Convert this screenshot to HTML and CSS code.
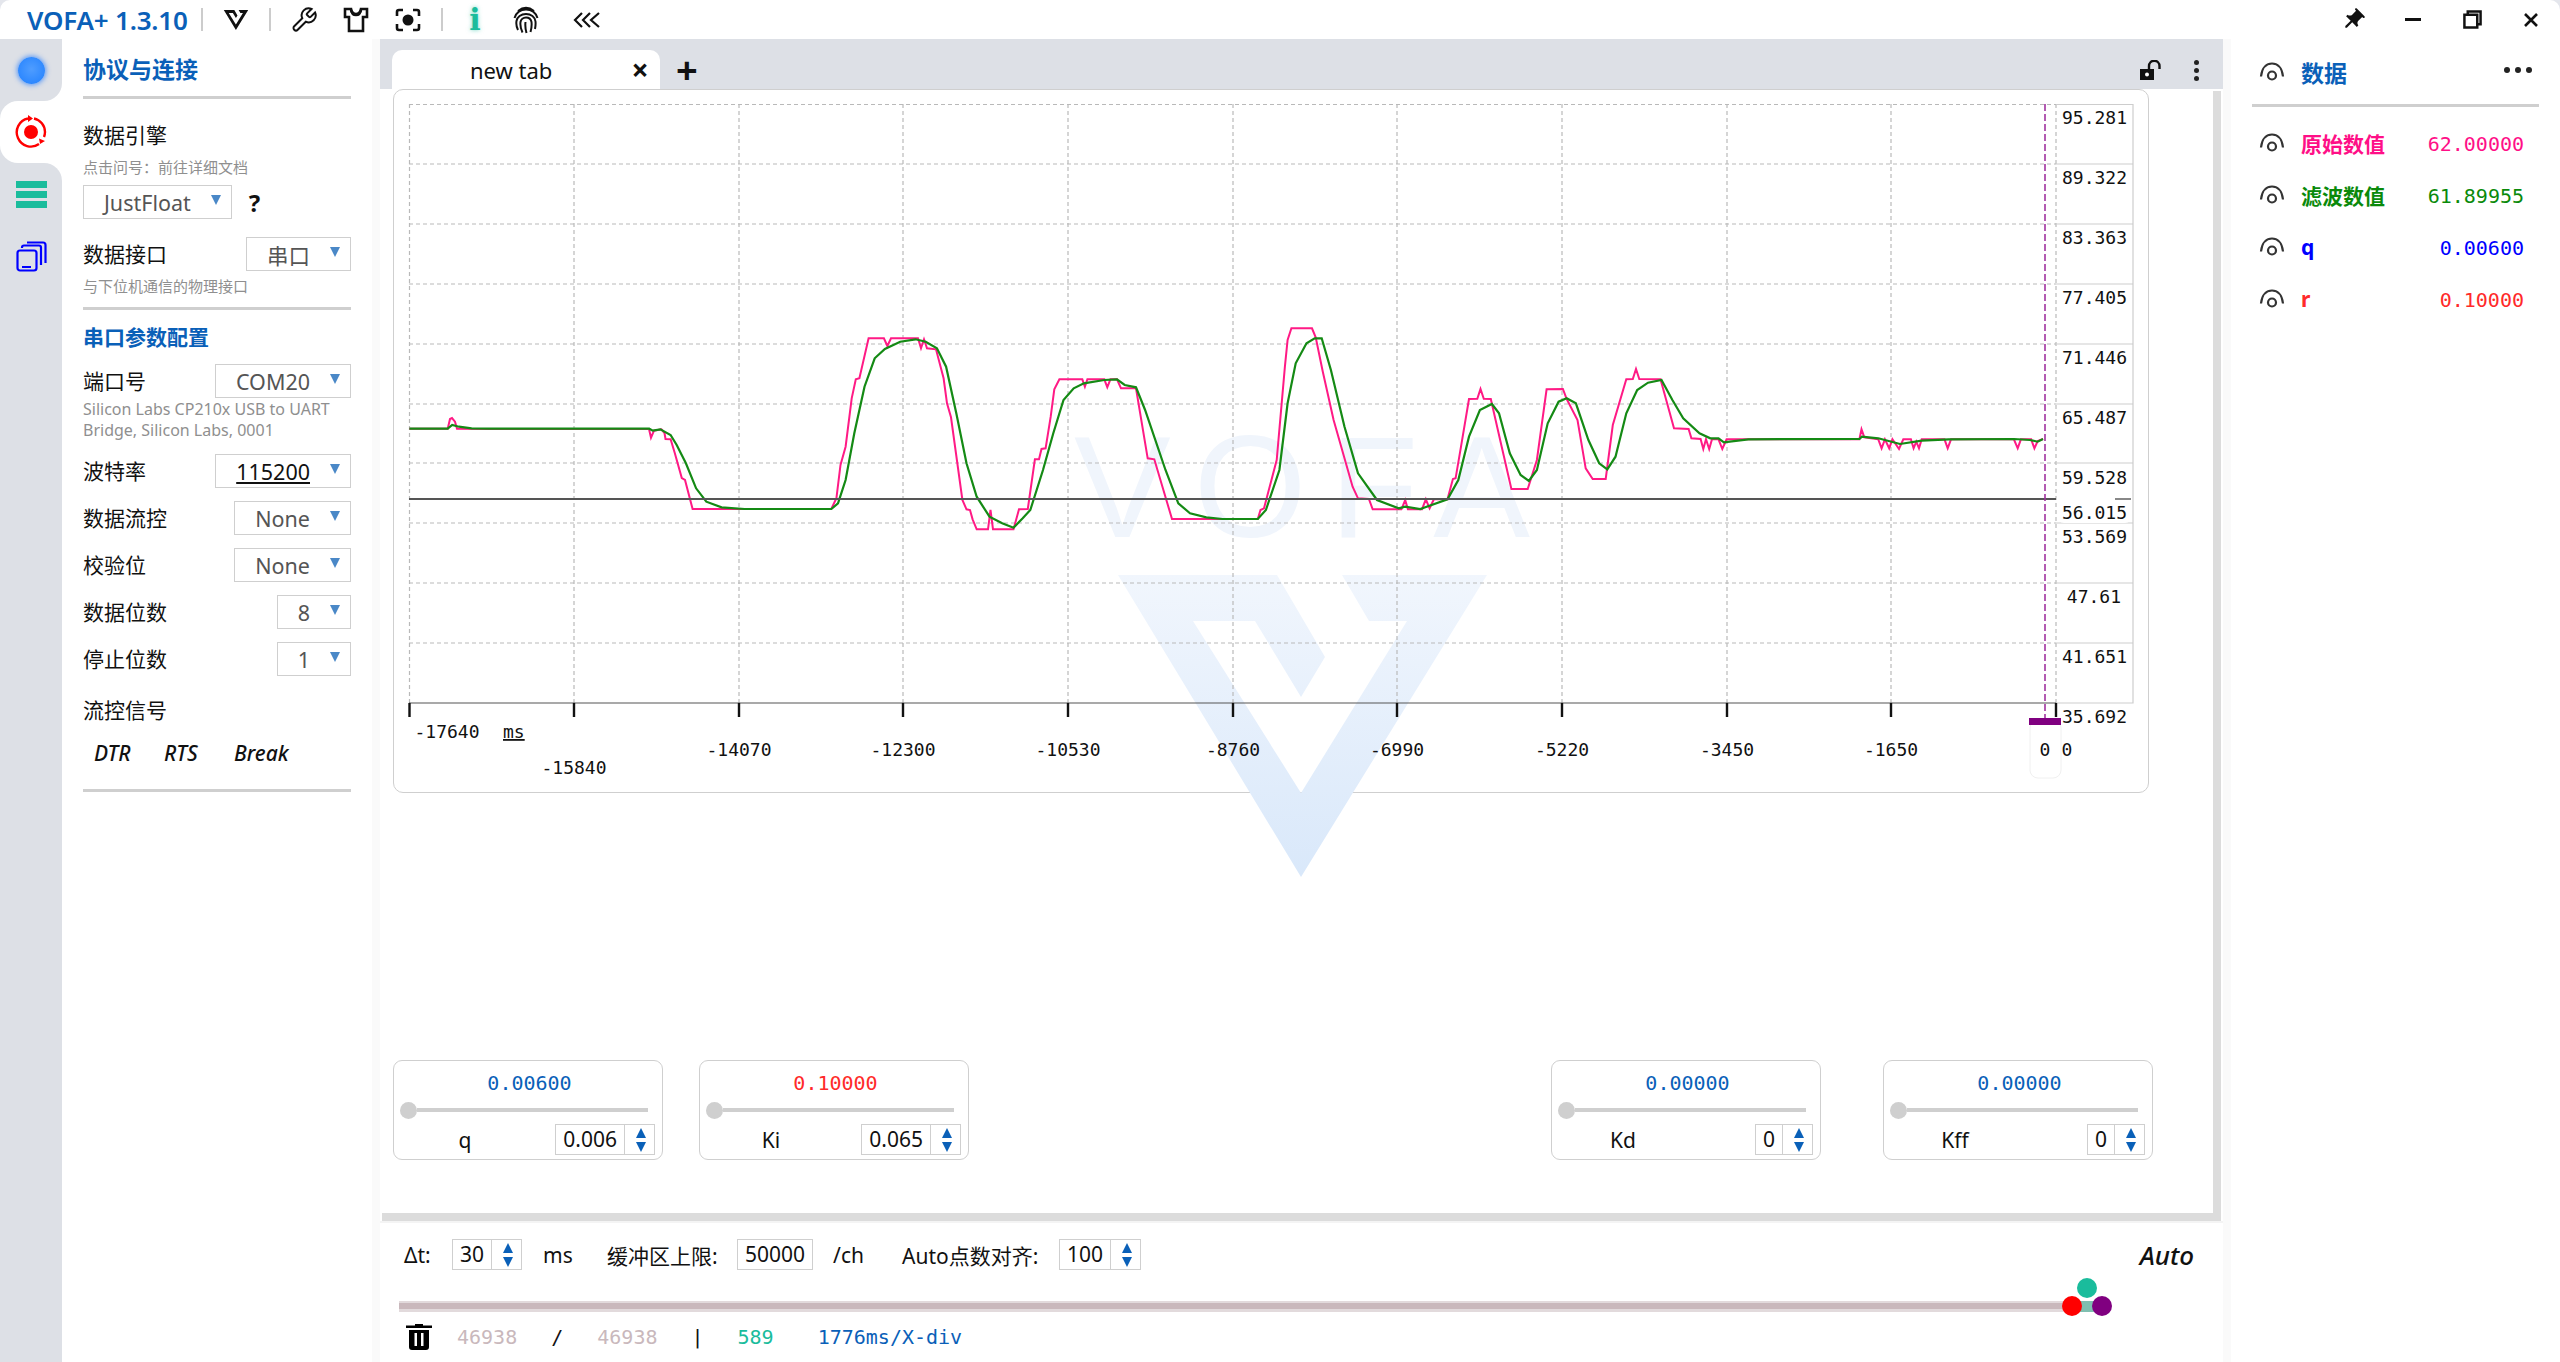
FILE: index.html
```html
<!DOCTYPE html>
<html lang="zh-CN">
<head>
    <meta charset="UTF-8">
    <title>VOFA+ 1.3.10</title>
    <link rel="stylesheet" href="styles.css">
</head>
<body>
<svg class="defs">
    <symbol id="vofa-v" viewBox="1118 575 369 302">
        <path d="M1118 575H1277L1325 657L1301 697L1255 621H1193L1301 793L1407 621H1369L1342 575H1487L1301 877Z"/>
    </symbol>
    <symbol id="eye-ico" viewBox="0 0 26 20">
        <path d="M2 14.500C3 5 8 1.500 13 1.500S23 5 24 14.500"/>
        <circle cx="13" cy="13.500" r="4"/>
    </symbol>
    <linearGradient id="wm-fade" x1="0" y1="0" x2="0" y2="1">
        <stop offset="0" stop-color="#f1f6fd"/>
        <stop offset="1" stop-color="#d9e8fa"/>
    </linearGradient>
</svg>

<div class="window">
    <header class="topbar">
        <span class="app-name">VOFA+ 1.3.10</span>
        <span class="sep sep-a"></span>
        <svg class="ico ico-logo"><use href="#vofa-v"/></svg>
        <span class="sep sep-b"></span>
        <svg class="ico ico-wrench" viewBox="0 0 24 24"><path d="M14.7 6.3a1 1 0 0 0 0 1.4l1.6 1.6a1 1 0 0 0 1.4 0l3.77-3.77a6 6 0 0 1-7.94 7.94l-6.91 6.91a2.12 2.12 0 0 1-3-3l6.91-6.91a6 6 0 0 1 7.94-7.94z"/></svg>
        <svg class="ico ico-shirt" viewBox="0 0 26 26"><path d="M2 2h6c.5 4 1.500 6 5 6s4.500-2 5-6h6v8h-4v14H6V10H2z"/><path d="M8 3c1 3 2 4 5 4s4-1 5-4"/></svg>
        <svg class="ico ico-focus" viewBox="0 0 26 24"><path d="M8 2H4a2 2 0 0 0-2 2v4M18 2h4a2 2 0 0 1 2 2v4M8 22H4a2 2 0 0 1-2-2v-4M18 22h4a2 2 0 0 0 2-2v-4"/><circle cx="13" cy="12" r="5.500"/></svg>
        <span class="sep sep-c"></span>
        <span class="info-i">i</span>
        <svg class="ico ico-print" viewBox="0 0 28 28"><path d="M6 5c5-4 11-4 16 0M2.500 12c2-6 7-8.500 11.500-8.500S23.500 6 25.500 12M6 24c-1.500-3-2-6-1.500-9 .6-4 4.500-7 9.500-7s9 3 9.500 7.500c.3 3 0 5-.5 7.500M10.500 26.500c-1.500-3-2.500-6.500-2-10.500.4-2.500 2.800-4.500 5.500-4.500s5 2 5.500 4.500c.4 3.500 0 6.500-1 10M14.500 27c-1-3.500-1.500-7-1-11"/></svg>
        <svg class="ico ico-chev" viewBox="0 0 28 16"><path d="M9 1L2 8l7 7M17 1l-7 7 7 7M26 1l-8 7 8 7"/></svg>

        <div class="win-btns">
            <svg class="win-pin" viewBox="0 0 24 24"><path transform="rotate(45 12 12)" d="M16 9V4h1c.55 0 1-.45 1-1s-.45-1-1-1H7c-.55 0-1 .45-1 1s.45 1 1 1h1v5c0 1.660-1.340 3-3 3v2h5.970v7l1 1 1-1v-7H19v-2c-1.660 0-3-1.340-3-3z"/></svg>
            <span class="win-min"></span>
            <svg class="win-max" viewBox="0 0 20 20"><path d="M5 5V1.500h13.500V15H15M1.500 5H15v13.500H1.500z"/></svg>
            <svg class="win-close" viewBox="0 0 14 14"><path d="M1 1l12 12M13 1L1 13"/></svg>
        </div>
    </header>

    <div class="app">
        <nav class="rail">
            <div class="rail-item rail-first"><span class="rail-dot"></span></div>
            <div class="rail-item rail-active">
                <svg class="rail-rec" viewBox="0 0 34 34"><path d="M20 3.500A14 14 0 0 1 31 17a14 14 0 0 1-1 5M25 29a14 14 0 0 1-21-6A14 14 0 0 1 14 3.500"/><path class="solid" d="M14 0l5 3.500-5 3.500zM31 26l-5 3-1-5.500z"/><circle class="solid" cx="17" cy="17" r="7"/></svg>
            </div>
            <div class="rail-item rail-third">
                <span class="bars"><i></i><i></i><i></i></span>
            </div>
            <div class="rail-item">
                <svg class="rail-copy" viewBox="0 0 31 31"><rect x="1.500" y="9.500" width="19" height="20" rx="2.500"/><path d="M6 26h9M6 7V6.500a2 2 0 0 1 2-2h15a2 2 0 0 1 2 2V24M11 1.500h16a2.500 2.500 0 0 1 2.500 2.500v18"/></svg>
            </div>
            <div class="rail-fill"></div>
        </nav>

        <aside class="side">
            <div class="side-title">协议与连接</div>
            <div class="rule"></div>
            <div class="field-name engine-name">数据引擎</div>
            <div class="hint engine-hint">点击问号：前往详细文档</div>
            <div class="engine-row">
                <div class="sel"><span>JustFloat</span><i></i></div>
                <b class="help">?</b>
            </div>
            <div class="row iface-row">
                <span class="field-name">数据接口</span>
                <div class="sel"><span>串口</span><i></i></div>
            </div>
            <div class="hint iface-hint">与下位机通信的物理接口</div>
            <div class="rule rule-b"></div>
            <div class="sub-title">串口参数配置</div>
            <div class="row port-row">
                <span class="field-name">端口号</span>
                <div class="sel"><span>COM20</span><i></i></div>
            </div>
            <div class="hint port-hint">Silicon Labs CP210x USB to UART Bridge, Silicon Labs, 0001</div>
            <div class="row">
                <span class="field-name">波特率</span>
                <div class="sel sel-edit"><span>115200</span><i></i></div>
            </div>
            <div class="row">
                <span class="field-name">数据流控</span>
                <div class="sel"><span>None</span><i></i></div>
            </div>
            <div class="row">
                <span class="field-name">校验位</span>
                <div class="sel"><span>None</span><i></i></div>
            </div>
            <div class="row">
                <span class="field-name">数据位数</span>
                <div class="sel"><span>8</span><i></i></div>
            </div>
            <div class="row">
                <span class="field-name">停止位数</span>
                <div class="sel"><span>1</span><i></i></div>
            </div>
            <div class="field-name flow-name">流控信号</div>
            <div class="flow-row">
                <span class="flow-dtr">DTR</span>
                <span class="flow-rts">RTS</span>
                <span class="flow-break">Break</span>
            </div>
            <div class="rule rule-c"></div>
        </aside>

        <main class="main">
            <div class="tabbar">
                <div class="tab"><span class="tab-name">new tab</span><span class="tab-x">×</span></div>
                <span class="tab-add">+</span>
                <svg class="tab-lock" viewBox="0 0 22 20"><path class="solid" d="M0 9h14v11H0z"/><circle class="hole" cx="7" cy="14.500" r="2"/><path d="M9 9V6a5.200 5.200 0 0 1 10.500 0v3"/></svg>
                <span class="kebab"><i></i><i></i><i></i></span>
            </div>

            <div class="view">
                <div class="view-inner">
                    <div class="canvas">
                        <div class="plot">
                            <svg class="chart" viewBox="394 90 1754 702">
                                <!-- watermark -->
                                <text class="wm-text" x="1074" y="537" textLength="456">VOFA</text>
                                <use class="wm-logo" href="#vofa-v" x="1118" y="575" width="369" height="302"/>

                                <path class="grid" d="M409 104.500H2056M409 164H2056M409 224H2056M409 284H2056M409 344H2056M409 404H2056M409 463H2056M409 523H2056M409 583H2056M409 643H2056"/>
                                <path class="grid" d="M409.500 104V703M574 104V703M739 104V703M903 104V703M1068 104V703M1233 104V703M1397 104V703M1562 104V703M1727 104V703M1891 104V703M2056 104V703"/>
                                <path class="scale-box" d="M2056 104.500H2133V703H2056M2056 164H2133M2056 224H2133M2056 284H2133M2056 344H2133M2056 404H2133M2056 463H2133M2056 523H2133M2056 583H2133M2056 643H2133"/>

                                <polyline class="trace-raw" points="409.400,428.700 447.700,428.700 450,419 452,418 455,421.700 457,428.700 489.500,429 649,429 651,437.700 654,430.700 661.400,429.300 664.500,433 665.500,439 670.600,439.300 674.700,452.700 681.800,478 685,480 692.600,509 726.700,509 831.300,509 836.400,498.300 840.500,465 845.600,446.700 851.700,398.300 855.800,379.300 859.400,378.300 868.600,338.300 883.900,338.300 887.400,346 891,338.300 918,338.300 921,348.300 924,339.300 927,348.300 936,349.300 943.600,378.300 947,403.300 951,417.300 962.400,500 966.500,509.300 970,510 972.600,519.300 976.700,529.300 988,529.300 990.500,510 993,529.300 1013.500,529.300 1019,509.300 1027.800,509 1034.900,459.300 1039,459.300 1041.500,449 1045.600,448.300 1050.700,416.700 1054.300,389.300 1059.400,379.300 1082.300,379.300 1084.900,386.700 1087.400,379.300 1104.300,379.300 1107.300,387.300 1110.400,379.300 1117,379.300 1121,388.300 1136,388.300 1147.700,458.300 1154.300,459.300 1172,519 1190,519 1257.800,519 1260.500,510 1264,508.300 1276.700,460 1284.900,366.700 1287.600,340 1291.400,328.300 1312,328.300 1315.700,337.300 1322.800,371.700 1333.600,420 1352.600,486.700 1358,498.300 1368.900,499 1372.700,509.300 1401.400,509.300 1405.200,500 1407.900,509.300 1422,509.300 1425.800,499.300 1429.600,508.300 1433.900,499.300 1447.500,499.300 1452.900,479 1455.600,478.300 1461,446.700 1469,399 1477.300,398.700 1480.500,389 1483.800,398.700 1490.800,399 1501.700,446.700 1511.400,489 1527.700,489 1536.900,460 1546.600,389.300 1562.900,389 1566.700,399 1577.500,420 1585.700,468.300 1592.700,479 1605.700,479 1612.800,425 1626.300,379.300 1632.800,379 1636,369 1639.300,379 1660.500,379.300 1674,428.300 1688.600,429 1691.400,438.300 1700.600,439 1703.300,449 1706,439.300 1709.200,449 1712,439.300 1718.500,439.300 1722.300,449 1726.600,439.300 1859.400,439.300 1861.500,429.300 1864.300,437.300 1878.300,439.300 1881.600,448.300 1884.900,439.300 1889.200,448.300 1892.400,439.300 1899,449 1903.300,439.300 1910.900,439.300 1913.600,448.300 1916.300,441.700 1919,448.300 1921.700,439.300 1944.500,439.300 1947.700,448.300 1951,439.300 2013.900,439.300 2017.700,448.300 2020.900,439.300 2031.200,439.300 2034.400,448.300 2037.700,441 2043,439"/>
                                <polyline class="trace-filt" points="409.400,428.700 447.700,428.700 452.200,425 458.900,426.700 471.600,428.300 489.500,428.700 649.200,428.700 652.800,430.700 660.400,429.300 670.600,435 676.700,445 685.900,463.300 696.100,488.300 706.300,501.700 721.600,507.300 744.600,509 831.300,509 838,503.300 845.600,480 854.300,433.300 864.500,386.700 874.700,358.300 884.900,349 900.200,341.700 915.500,339.300 925.700,341.700 936.900,348.300 946.100,366.700 956.300,413.300 966.500,463.300 976.700,496.700 989.500,516.700 1002.200,523.300 1013.500,527.700 1022.700,518.300 1030.300,510 1043,470 1053.300,433.300 1063.500,400 1073.700,388.300 1083.900,383.300 1104.300,380 1117,379.300 1124.700,385 1136,387.300 1145.100,410 1165.500,470 1178.300,503.300 1190,513.300 1206.300,517.300 1222.500,519 1257.800,519 1265.900,510 1279.400,470 1287.600,403.300 1295.700,363.300 1306.500,343.300 1314.700,338.300 1321.700,338.300 1330.900,370 1344.500,426.700 1358,473.300 1377,500 1398.700,508.300 1405.200,506.700 1420.300,509 1447.500,499.300 1458.300,480 1469,436.700 1479.900,410 1491.900,404 1499,413.300 1509.800,453.300 1520.600,475 1528.800,481 1536.900,470 1547.700,423.300 1558.600,401.700 1566.700,398.300 1575.900,403.300 1588.400,440 1599.200,463.300 1607.300,469.300 1615.500,456.700 1626.300,413.300 1637.200,390 1648,382.700 1661.500,380 1672.400,400 1683.200,418.300 1699.500,433.300 1710.300,438.300 1718.500,438.300 1723.900,442.300 1748.300,439.300 1859.400,439 1862,436.700 1878.300,438.300 1900,444 1921.700,440.700 1948.800,439.300 2013.900,439 2030,440 2037.700,441.700 2043,439"/>

                                <!-- cursor and level marker -->
                                <line class="level" x1="409" y1="499" x2="2056" y2="499"/>
                                <line class="cursor" x1="2045" y1="104" x2="2045" y2="718"/>
                                <rect class="tip" x="2057" y="498" width="75" height="25" rx="7"/>
                                <line class="level-end" x1="2115" y1="499" x2="2131" y2="499"/>

                                <!-- x axis -->
                                <line class="x-axis" x1="409" y1="703" x2="2056" y2="703"/>
                                <path class="tick" d="M409.500 703V717M574 703V717M739 703V717M903 703V717M1068 703V717M1233 703V717M1397 703V717M1562 703V717M1727 703V717M1891 703V717M2056 703V717"/>

                                <g class="y-num">
                                    <text x="2127" y="124">95.281</text>
                                    <text x="2127" y="184">89.322</text>
                                    <text x="2127" y="244">83.363</text>
                                    <text x="2127" y="304">77.405</text>
                                    <text x="2127" y="364">71.446</text>
                                    <text x="2127" y="424">65.487</text>
                                    <text x="2127" y="484">59.528</text>
                                    <text x="2127" y="519">56.015</text>
                                    <text x="2127" y="543">53.569</text>
                                    <text x="2121" y="603">47.61</text>
                                    <text x="2127" y="663">41.651</text>
                                    <text x="2127" y="723">35.692</text>
                                </g>
                                <g class="x-num">
                                    <text x="447" y="738">-17640</text>
                                    <text x="574" y="774">-15840</text>
                                    <text x="739" y="756">-14070</text>
                                    <text x="903" y="756">-12300</text>
                                    <text x="1068" y="756">-10530</text>
                                    <text x="1233" y="756">-8760</text>
                                    <text x="1397" y="756">-6990</text>
                                    <text x="1562" y="756">-5220</text>
                                    <text x="1727" y="756">-3450</text>
                                    <text x="1891" y="756">-1650</text>
                                </g>
                                <text class="x-unit" x="503" y="738">ms</text>

                                <rect class="zero-box" x="2030" y="720" width="31" height="58" rx="8"/>
                                <rect class="zero-cap" x="2029" y="718" width="32" height="7"/>
                                <g class="x-num">
                                    <text x="2045" y="756">0</text>
                                    <text x="2067" y="756">0</text>
                                </g>
                            </svg>
                        </div>

                        <div class="controls">
                            <section class="ctl">
                                <div class="ctl-value">0.00600</div>
                                <div class="ctl-slider"><i></i><b></b></div>
                                <div class="ctl-foot">
                                    <span class="ctl-name">q</span>
                                    <div class="spin"><span>0.006</span><em><i></i><i></i></em></div>
                                </div>
                            </section>
                            <section class="ctl">
                                <div class="ctl-value ctl-red">0.10000</div>
                                <div class="ctl-slider"><i></i><b></b></div>
                                <div class="ctl-foot">
                                    <span class="ctl-name">Ki</span>
                                    <div class="spin"><span>0.065</span><em><i></i><i></i></em></div>
                                </div>
                            </section>
                            <section class="ctl ctl-push">
                                <div class="ctl-value">0.00000</div>
                                <div class="ctl-slider"><i></i><b></b></div>
                                <div class="ctl-foot">
                                    <span class="ctl-name">Kd</span>
                                    <div class="spin"><span>0</span><em><i></i><i></i></em></div>
                                </div>
                            </section>
                            <section class="ctl">
                                <div class="ctl-value">0.00000</div>
                                <div class="ctl-slider"><i></i><b></b></div>
                                <div class="ctl-foot">
                                    <span class="ctl-name">Kff</span>
                                    <div class="spin"><span>0</span><em><i></i><i></i></em></div>
                                </div>
                            </section>
                        </div>
                    </div>
                    <div class="vbar"></div>
                </div>
                <div class="hbar"></div>
            </div>

            <footer class="bottom">
                <div class="bottom-row">
                    <span class="lb-dt">Δt:</span>
                    <div class="spin"><span>30</span><em><i></i><i></i></em></div>
                    <span class="lb-ms">ms</span>
                    <span class="lb-buf">缓冲区上限:</span>
                    <div class="spin"><span>50000</span></div>
                    <span class="lb-ch">/ch</span>
                    <span class="lb-auto">Auto点数对齐:</span>
                    <div class="spin"><span>100</span><em><i></i><i></i></em></div>
                    <span class="auto-btn">Auto</span>
                </div>
                <div class="track">
                    <span class="track-done"></span>
                    <span class="track-sel"></span>
                    <i class="knob knob-red"></i>
                    <i class="knob knob-teal"></i>
                    <i class="knob knob-purple"></i>
                </div>
                <div class="status">
                    <svg class="trash" viewBox="0 0 26 27"><path d="M9 2.500V1h8v1.500h9V5H0V2.500z"/><path fill-rule="evenodd" d="M3 7h20v17a3 3 0 0 1-3 3H6a3 3 0 0 1-3-3zM8.500 10v13h2.500V10zM15 10v13h2.500V10z"/></svg>
                    <span class="st-count">46938</span>
                    <span class="st-mark">/</span>
                    <span class="st-count">46938</span>
                    <span class="st-mark">|</span>
                    <span class="st-green">589</span>
                    <span class="st-blue">1776ms/X-div</span>
                </div>
            </footer>
        </main>

        <aside class="data">
            <div class="data-head">
                <svg class="eye"><use href="#eye-ico"/></svg>
                <span class="data-title">数据</span>
                <span class="more"><i></i><i></i><i></i></span>
            </div>
            <div class="rule"></div>
            <div class="data-list">
                <div class="data-row c-pink">
                    <svg class="eye"><use href="#eye-ico"/></svg>
                    <span class="data-name">原始数值</span>
                    <span class="data-val">62.00000</span>
                </div>
                <div class="data-row c-green">
                    <svg class="eye"><use href="#eye-ico"/></svg>
                    <span class="data-name">滤波数值</span>
                    <span class="data-val">61.89955</span>
                </div>
                <div class="data-row c-blue">
                    <svg class="eye"><use href="#eye-ico"/></svg>
                    <span class="data-name">q</span>
                    <span class="data-val">0.00600</span>
                </div>
                <div class="data-row c-red">
                    <svg class="eye"><use href="#eye-ico"/></svg>
                    <span class="data-name">r</span>
                    <span class="data-val">0.10000</span>
                </div>
            </div>
        </aside>
    </div>
</div>
</body>
</html>
```

FILE: styles.css
```css
:root {
    --ui: "Noto Sans", "Noto Sans CJK SC", sans-serif;
    --mono: "DejaVu Sans Mono", monospace;
    --blue: #0a60b8;
    --teal: #1abc9c;
    --rail: #dde0e6;
    --line: #cfcfcf;
}

html, body {
    margin: 0;
    height: 1362px;
    background: #e4e6ec;
    overflow: hidden;
}

body {
    font-family: var(--ui);
    font-size: 21px;
    color: #111;
}

.defs {
    position: absolute;
    width: 0;
    height: 0;
}

.window {
    height: 1362px;
    background: #fff;
    border-radius: 10px 10px 0 0;
    overflow: hidden;
    display: flex;
    flex-direction: column;
}

/* top bar */
.topbar {
    height: 39px;
    flex: none;
    display: flex;
    align-items: center;
    padding-left: 27px;
}

.app-name {
    width: 160px;
    font-size: 26px;
    font-weight: 600;
    color: var(--blue);
    white-space: nowrap;
    letter-spacing: -0.2px;
}

.sep {
    width: 2px;
    height: 23px;
    background: #ccc;
}

.sep-a { margin-left: 14px; }
.sep-b { margin-left: 20px; }
.sep-c { margin-left: 20px; }

.ico {
    flex: none;
    fill: none;
    stroke: #111;
    stroke-width: 2;
}

.ico-logo {
    width: 26px;
    height: 20px;
    margin-left: 20px;
    fill: #111;
    stroke: none;
}

.ico-wrench { width: 28px; height: 28px; margin-left: 19px; stroke-width: 1.7; }
.ico-shirt { width: 26px; height: 26px; margin-left: 25px; stroke-width: 2.6; }
.ico-focus { width: 26px; height: 24px; margin-left: 26px; stroke-width: 2.6; }
.ico-focus circle { fill: #111; stroke: none; }
.ico-print { width: 28px; height: 28px; margin-left: 30px; stroke-width: 2; }
.ico-chev { width: 28px; height: 16px; margin-left: 33px; stroke-width: 2.2; }

.info-i {
    width: 14px;
    margin-left: 25px;
    font-family: "DejaVu Serif", serif;
    font-weight: bold;
    font-size: 30px;
    line-height: 30px;
    text-align: center;
    color: var(--teal);
    text-shadow: 0 0 4px rgba(26, 188, 156, 0.6);
}

.win-btns {
    margin-left: auto;
    display: flex;
    align-items: center;
    height: 39px;
}

.win-pin { width: 26px; height: 26px; fill: #111; margin-right: 39px; }
.win-min { width: 16px; height: 3px; background: #111; margin-right: 42px; }
.win-max { width: 19px; height: 19px; fill: none; stroke: #111; stroke-width: 2.6; margin-right: 42px; }
.win-close { width: 14px; height: 14px; fill: none; stroke: #111; stroke-width: 2.6; margin-right: 22px; }

.app {
    flex: 1;
    display: flex;
    min-height: 0;
}

/* left rail */
.rail {
    width: 62px;
    flex: none;
    display: flex;
    flex-direction: column;
    background: linear-gradient(90deg, var(--rail) 50%, #fff 50%);
}

.rail-item {
    height: 62px;
    flex: none;
    display: flex;
    align-items: center;
    justify-content: center;
    background: var(--rail);
}

.rail-first { border-radius: 0 0 18px 0; }

.rail-active {
    background: #fff;
    border-radius: 18px 0 0 18px;
}

.rail-third { border-radius: 0 18px 0 0; }

.rail-fill {
    flex: 1;
    background: var(--rail);
}

.rail-dot {
    width: 27px;
    height: 27px;
    border-radius: 50%;
    background: radial-gradient(circle at 50% 45%, #4f9dff, #1f7fff);
    box-shadow: 0 0 5px 1px rgba(30, 120, 255, 0.7);
}

.rail-rec { width: 34px; height: 34px; fill: none; stroke: #f00; stroke-width: 2.4; }
.rail-rec .solid { fill: #f00; stroke: none; }

.bars {
    width: 31px;
    display: flex;
    flex-direction: column;
    gap: 3px;
}

.bars i {
    height: 7px;
    background: var(--teal);
}

.rail-copy { width: 31px; height: 31px; fill: none; stroke: #00f; stroke-width: 2.2; }

/* protocol panel */
.side {
    width: 318px;
    flex: none;
    box-sizing: border-box;
    padding: 0 21px;
    border-right: 8px solid #fafafa;
}

.side-title {
    height: 57px;
    line-height: 60px;
    font-size: 23px;
    font-weight: bold;
    color: var(--blue);
}

.rule {
    height: 3px;
    background: var(--line);
}

.field-name {
    font-size: 21px;
    line-height: 30px;
    white-space: nowrap;
}

.engine-name { margin-top: 21px; }

.hint {
    font-size: 15px;
    line-height: 20px;
    color: #8f8f8f;
}

.engine-hint { margin-top: 7px; }

.engine-row {
    margin-top: 8px;
    display: flex;
    align-items: center;
}

.help {
    margin-left: 17px;
    font-size: 24px;
}

.row {
    margin-top: 13px;
    height: 34px;
    display: flex;
    align-items: center;
    justify-content: space-between;
}

.iface-row { margin-top: 18px; }
.iface-hint { margin-top: 5px; }
.rule-b { margin-top: 11px; }

.sub-title {
    margin-top: 12px;
    font-size: 21px;
    font-weight: bold;
    line-height: 30px;
    color: var(--blue);
}

.port-row { margin-top: 12px; }

.port-hint {
    margin-top: 1px;
    font-size: 16px;
    line-height: 21px;
}

.sel {
    height: 34px;
    box-sizing: border-box;
    display: flex;
    align-items: center;
    gap: 20px;
    padding: 0 10px 0 20px;
    border: 1.5px solid var(--line);
    color: #555;
    font-size: 21.5px;
    white-space: nowrap;
}

.sel i {
    flex: none;
    width: 0;
    height: 0;
    border-left: 5px solid transparent;
    border-right: 5px solid transparent;
    border-top: 10px solid #4a88c7;
    margin-top: -4px;
}

.sel-edit span {
    color: #111;
    text-decoration: underline;
}

.flow-name { margin-top: 19px; }

.flow-row {
    margin-top: 13px;
    height: 30px;
    display: flex;
    align-items: center;
    padding-left: 11px;
    font-size: 21px;
    font-style: italic;
    font-weight: 500;
}

.flow-dtr { width: 70px; }
.flow-rts { width: 70px; }
.rule-c { margin-top: 21px; }

/* centre */
.main {
    width: 1843px;
    flex: none;
    display: flex;
    flex-direction: column;
}

.tabbar {
    height: 50px;
    flex: none;
    background: var(--rail);
    display: flex;
    align-items: flex-end;
    padding-left: 12px;
    position: relative;
}

.tab {
    width: 268px;
    height: 39px;
    background: #fff;
    border-radius: 10px 10px 0 0;
    display: flex;
    align-items: center;
}

.tab-name {
    margin-left: 78px;
    font-size: 22px;
}

.tab-x {
    margin-left: 79px;
    font-size: 30px;
    font-weight: bold;
    line-height: 30px;
}

.tab-add {
    margin-left: 16px;
    height: 39px;
    font-size: 38px;
    font-weight: bold;
    line-height: 38px;
}

.tab-lock {
    position: absolute;
    right: 61px;
    top: 21px;
    width: 22px;
    height: 20px;
    fill: none;
    stroke: #111;
    stroke-width: 2.4;
}

.tab-lock .solid { fill: #111; stroke: none; }
.tab-lock .hole { fill: #fff; stroke: none; }

.kebab {
    position: absolute;
    right: 24px;
    top: 21px;
    display: flex;
    flex-direction: column;
    gap: 3px;
}

.kebab i {
    width: 5px;
    height: 5px;
    border-radius: 50%;
    background: #222;
}

.view {
    height: 1134px;
    flex: none;
    display: flex;
    flex-direction: column;
    border-bottom: 2px solid #f4f4f4;
    box-sizing: border-box;
}

.view-inner {
    flex: 1;
    min-height: 0;
    display: flex;
}

.canvas {
    width: 1833px;
    flex: none;
    box-sizing: border-box;
    padding: 0 60px 0 13px;
}

.vbar {
    width: 8px;
    margin-top: 2px;
    background: #dcdcdc;
}

.hbar {
    height: 8px;
    flex: none;
    margin: 0 2px;
    background: #dcdcdc;
}

.plot {
    width: 1756px;
    height: 704px;
    box-sizing: border-box;
    border: 1px solid var(--line);
    border-radius: 10px;
}

.chart {
    display: block;
    width: 1754px;
    height: 702px;
    overflow: visible;
}

.wm-text {
    font-family: "Liberation Sans", sans-serif;
    font-size: 145px;
    fill: #f0f5fc;
}

.wm-logo { fill: url(#wm-fade); }

.grid {
    fill: none;
    stroke: #b9b9b9;
    stroke-width: 1.2;
    stroke-dasharray: 4 3;
}

.scale-box {
    fill: none;
    stroke: #cdcdcd;
    stroke-width: 1.2;
}

.trace-raw {
    fill: none;
    stroke: #ff1a85;
    stroke-width: 2;
}

.trace-filt {
    fill: none;
    stroke: #148a14;
    stroke-width: 2.2;
}

.level {
    stroke: #555;
    stroke-width: 2;
}

.level-end {
    stroke: #888;
    stroke-width: 2;
}

.cursor {
    stroke: #a0349f;
    stroke-width: 1.6;
    stroke-dasharray: 7 3;
}

.tip { fill: #fff; }

.x-axis {
    stroke: #555;
    stroke-width: 1.2;
}

.tick {
    fill: none;
    stroke: #111;
    stroke-width: 2.4;
}

.y-num text,
.x-num text,
.x-unit {
    font-family: var(--mono);
    font-size: 18px;
    fill: #111;
}

.y-num text { text-anchor: end; }
.x-num text { text-anchor: middle; }
.x-unit { text-decoration: underline; }

.zero-box {
    fill: #fff;
    stroke: #f0f0f0;
}

.zero-cap { fill: #800080; }

/* sliders */
.controls {
    margin-top: 267px;
    display: flex;
    gap: 36px;
}

.ctl {
    width: 270px;
    height: 100px;
    box-sizing: border-box;
    border: 1.5px solid var(--line);
    border-radius: 9px;
}

.ctl-push { margin-left: auto; }
.ctl-push + .ctl { margin-left: 26px; }

.ctl-value {
    height: 41px;
    padding: 3px 0 0 3px;
    box-sizing: border-box;
    text-align: center;
    font-family: var(--mono);
    font-size: 20px;
    line-height: 38px;
    color: var(--blue);
}

.ctl-red { color: #ff2a2a; }

.ctl-slider {
    height: 16px;
    display: flex;
    align-items: center;
    padding: 0 14px 0 6px;
}

.ctl-slider i {
    flex: none;
    width: 17px;
    height: 17px;
    border-radius: 50%;
    background: #cfcfcf;
}

.ctl-slider b {
    flex: 1;
    height: 4px;
    background: #cfcfcf;
}

.ctl-foot {
    margin-top: 6px;
    height: 31px;
    display: flex;
    align-items: center;
    justify-content: space-between;
    padding-right: 7px;
}

.ctl-name {
    width: 142px;
    text-align: center;
    font-size: 21px;
}

.spin {
    height: 31px;
    box-sizing: border-box;
    display: flex;
    border: 1.5px solid var(--line);
}

.spin span {
    padding: 0 7px;
    font-size: 21px;
    line-height: 28px;
}

.spin em {
    width: 30px;
    box-sizing: border-box;
    padding-left: 3px;
    border-left: 1px solid var(--line);
    display: flex;
    flex-direction: column;
    align-items: center;
    justify-content: center;
    gap: 4px;
}

.spin em i {
    width: 0;
    height: 0;
    border-left: 5.5px solid transparent;
    border-right: 5.5px solid transparent;
}

.spin em i:first-child { border-bottom: 10px solid var(--blue); }
.spin em i:last-child { border-top: 10px solid var(--blue); }

/* bottom panel */
.bottom {
    flex: 1;
    min-height: 0;
    overflow: hidden;
}

.bottom-row {
    margin-top: 16px;
    padding: 0 29px 0 24px;
    height: 31px;
    display: flex;
    align-items: center;
    font-size: 21px;
    white-space: nowrap;
}

.lb-dt { width: 48px; }
.lb-ms { width: 64px; margin-left: 21px; }
.lb-buf { width: 130px; }
.lb-ch { width: 69px; margin-left: 20px; }
.lb-auto { width: 157px; }

.auto-btn {
    margin-left: auto;
    font-size: 26px;
    font-style: italic;
    font-weight: 500;
}

.track {
    position: relative;
    margin: 31px 0 0 19px;
    width: 1703px;
    height: 11px;
    display: flex;
}

.track-done {
    width: 1673px;
    height: 11px;
    box-sizing: border-box;
    background: #c9b8bc;
    border: solid #e2dadc;
    border-width: 2px 0 3px;
}

.track-sel {
    width: 30px;
    height: 11px;
    background: #7fbfb0;
}

.knob {
    position: absolute;
    width: 20px;
    height: 20px;
    border-radius: 50%;
}

.knob-red { left: 1663px; top: -5px; background: #f00; }
.knob-purple { left: 1693px; top: -5px; background: #800080; }
.knob-teal { left: 1678px; top: -23px; background: var(--teal); }

.status {
    margin-top: 11px;
    padding-left: 26px;
    height: 27px;
    display: flex;
    align-items: center;
    font-family: var(--mono);
    font-size: 20px;
    white-space: nowrap;
}

.trash {
    width: 26px;
    height: 27px;
    flex: none;
    margin-right: 25px;
}

.st-count { color: #c9b8bc; }
.st-mark { margin: 0 34px; color: #111; }
.st-green { color: var(--teal); }
.st-blue { margin-left: 44px; color: var(--blue); }

/* data panel */
.data {
    width: 337px;
    flex: none;
    box-sizing: border-box;
    padding: 0 21px;
    border-left: 8px solid #fafafa;
}

.data-head {
    height: 65px;
    display: flex;
    align-items: center;
    padding: 0 7px;
    box-sizing: border-box;
}

.data-title {
    font-size: 23px;
    font-weight: bold;
    color: var(--blue);
}

.more {
    margin-left: auto;
    display: flex;
    gap: 5px;
    margin-top: -3px;
}

.more i {
    width: 6px;
    height: 6px;
    border-radius: 50%;
    background: #222;
}

.eye {
    width: 26px;
    height: 20px;
    flex: none;
    margin-right: 16px;
    fill: none;
    stroke: #333;
    stroke-width: 2.2;
}

.data-list { padding-top: 11px; }

.data-row {
    height: 52px;
    display: flex;
    align-items: center;
    padding: 0 15px 0 7px;
}

.data-row .eye { margin-top: -2px; }

.data-name {
    margin-top: -3px;
    font-size: 21px;
    font-weight: bold;
}

.data-val {
    margin-left: auto;
    font-family: var(--mono);
    font-size: 20px;
}

.c-pink { color: #ff0f87; }
.c-green { color: #0a8a0a; }
.c-blue { color: #00f; }
.c-red { color: #ff2a2a; }
```
